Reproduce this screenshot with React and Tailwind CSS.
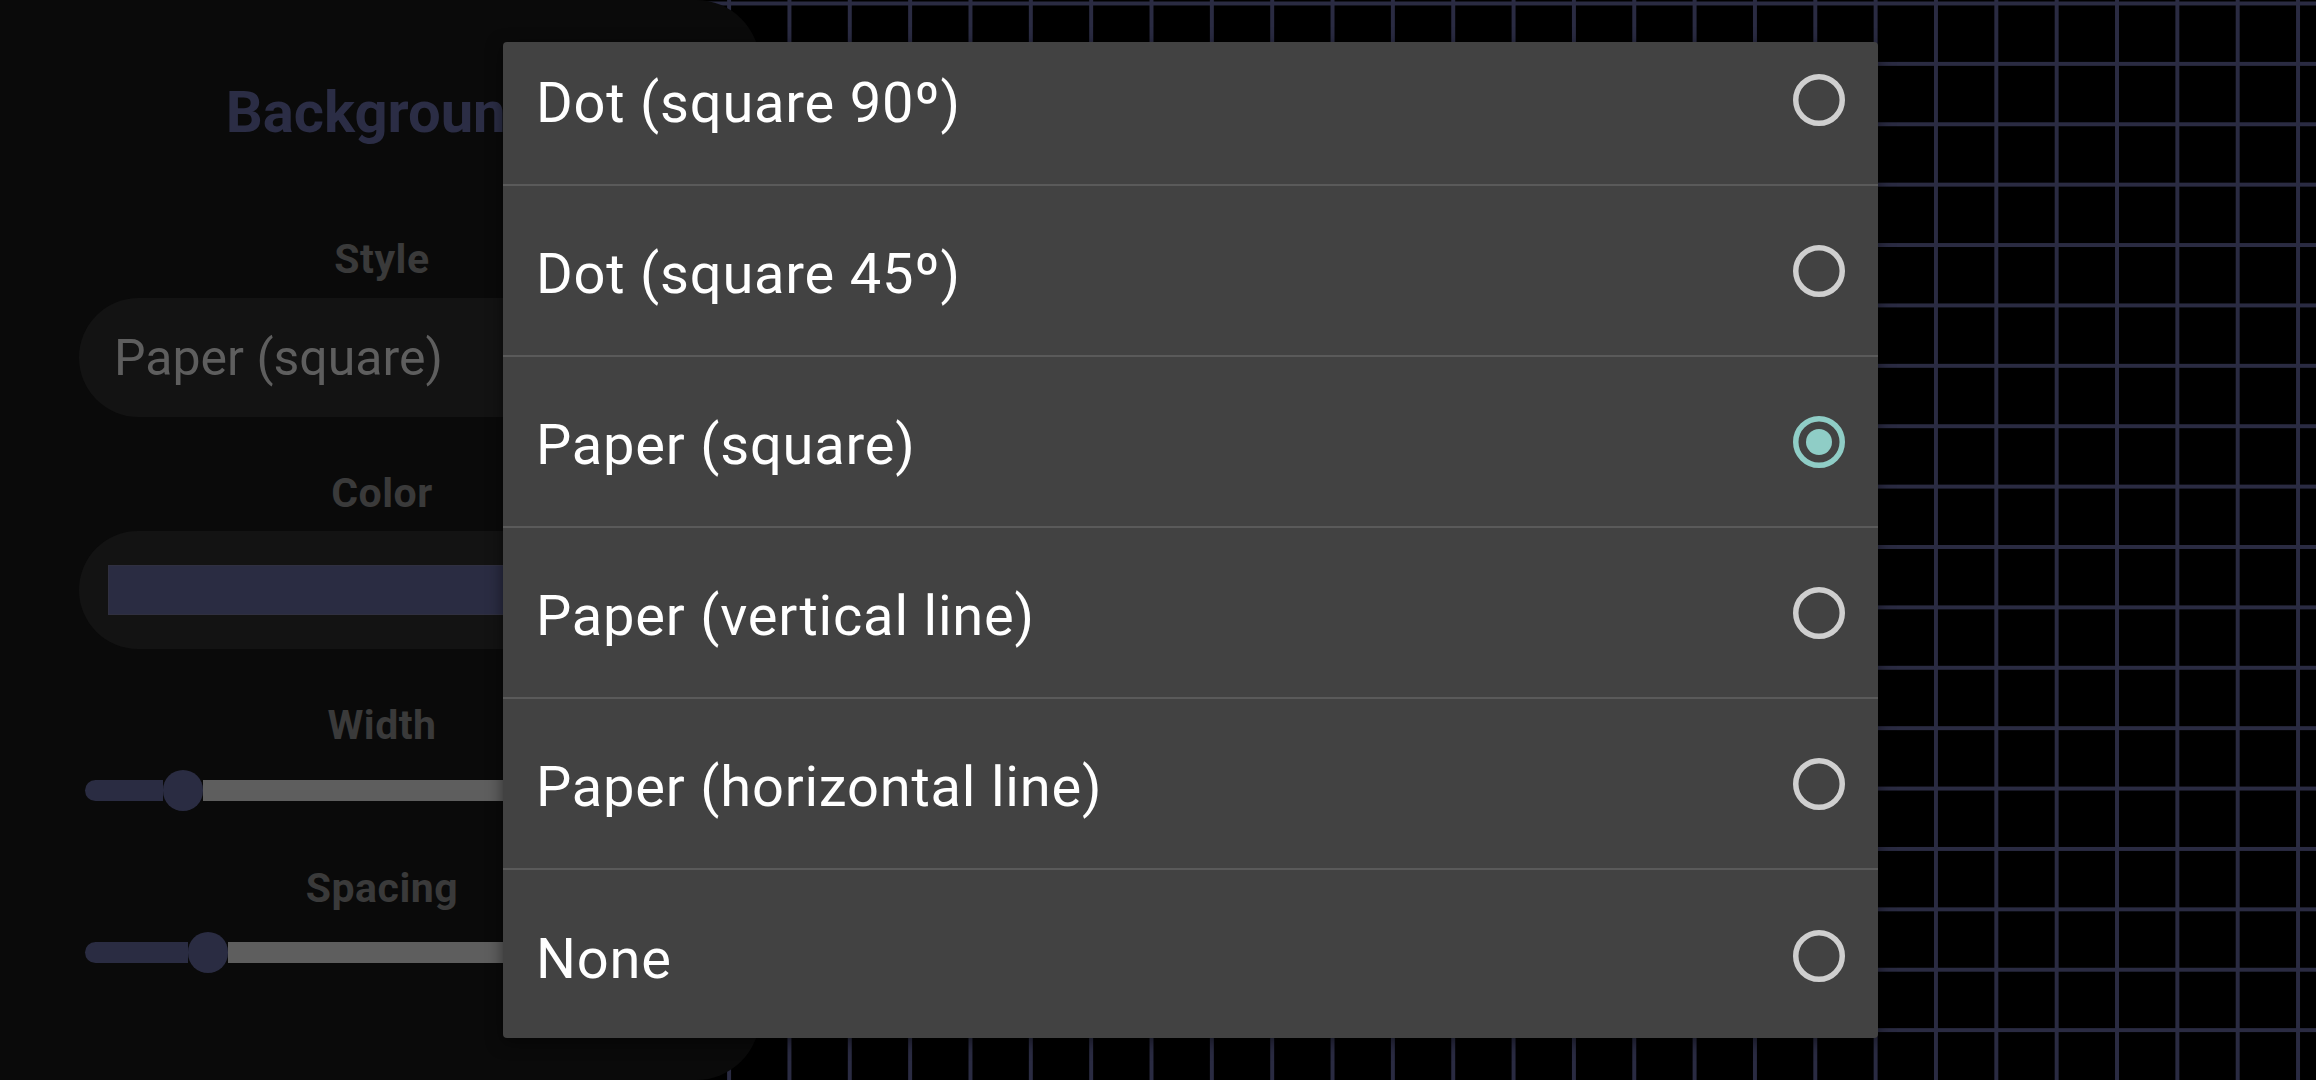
import React from 'react';

const options = [
  { label: 'Dot (square 90º)', value: 'dot90' },
  { label: 'Dot (square 45º)', value: 'dot45' },
  { label: 'Paper (square)', value: 'square' },
  { label: 'Paper (vertical line)', value: 'vertical' },
  { label: 'Paper (horizontal line)', value: 'horizontal' },
  { label: 'None', value: 'none' }
];

const Radio = ({ checked }) => (
  <svg width="52" height="52" viewBox="0 0 52 52">
    <circle
      cx="26"
      cy="26"
      r="23.25"
      fill="none"
      stroke={checked ? '#8fcdc6' : '#cfcfcf'}
      strokeWidth="5.5"
    />
    {checked && <circle cx="26" cy="26" r="13" fill="#8fcdc6" />}
  </svg>
);

const Slider = ({ filled }) => (
  <div className="flex items-center w-[594px] h-[41px]">
    <div className="h-[21px] rounded-l-full bg-[#2a2c42]" style={{ width: filled }} />
    <div className="w-[40px] h-[41px] rounded-full bg-[#2a2c42] shrink-0" />
    <div className="flex-1 h-[21px] rounded-r-full bg-[#5e5e5e]" />
  </div>
);

const Label = ({ children, className = '' }) => (
  <div className={`text-[41px] leading-none font-bold tracking-[0.5px] text-[#3a3a3a] ${className}`}>
    {children}
  </div>
);

const App = () => {
  const selected = 'square';

  return (
    <div className="relative w-[2316px] h-[1080px] overflow-hidden bg-black font-[Roboto,sans-serif] bg-[linear-gradient(to_right,#2a2b42_4px,transparent_4px),linear-gradient(to_bottom,#2a2b42_4px,transparent_4px)] [background-size:60.35px_60.4px] [background-position:3px_1.5px]">
      {/* Settings panel */}
      <div className="w-[760px] h-full bg-[#0a0a0a] rounded-r-[64px] pl-[4px] pt-[83px] flex flex-col items-center">
        <div className="text-[58px] leading-none font-bold text-[#2b2d45]">Background</div>

        <Label className="mt-[98px]">Style</Label>
        <div className="mt-[18px] w-[606px] h-[119px] rounded-full bg-[#131313] flex items-center pl-[35px]">
          <span className="text-[50px] leading-none text-[#5e5e5e]">Paper (square)</span>
        </div>

        <Label className="mt-[56px]">Color</Label>
        <div className="mt-[17px] w-[606px] h-[118px] rounded-full bg-[#131313] flex items-center pl-[29px] pr-[29px]">
          <div className="w-full h-[50px] bg-[#2a2c42] border border-[#303040]" />
        </div>

        <Label className="mt-[56px]">Width</Label>
        <div className="mt-[24px]">
          <Slider filled={78} />
        </div>

        <Label className="mt-[57px]">Spacing</Label>
        <div className="mt-[23px]">
          <Slider filled={103} />
        </div>
      </div>

      {/* Style picker menu */}
      <div className="absolute left-[503px] top-[42px] w-[1375px] h-[996px] bg-[#424242] rounded-[4px] overflow-hidden shadow-[0_4px_16px_rgba(0,0,0,0.5)]">
        <div className="mt-[-27px]">
          {options.map((opt, i) => (
            <div
              key={opt.value}
              className={`h-[171px] flex items-center justify-between pl-[33px] pr-[33px] ${
                i < options.length - 1 ? 'border-b-2 border-[#5a5a5a]' : ''
              }`}
            >
              <span className="text-[56px] leading-none tracking-[0.8px] text-white pt-[6px]">{opt.label}</span>
              <Radio checked={opt.value === selected} />
            </div>
          ))}
        </div>
      </div>
    </div>
  );
};

export default App;
